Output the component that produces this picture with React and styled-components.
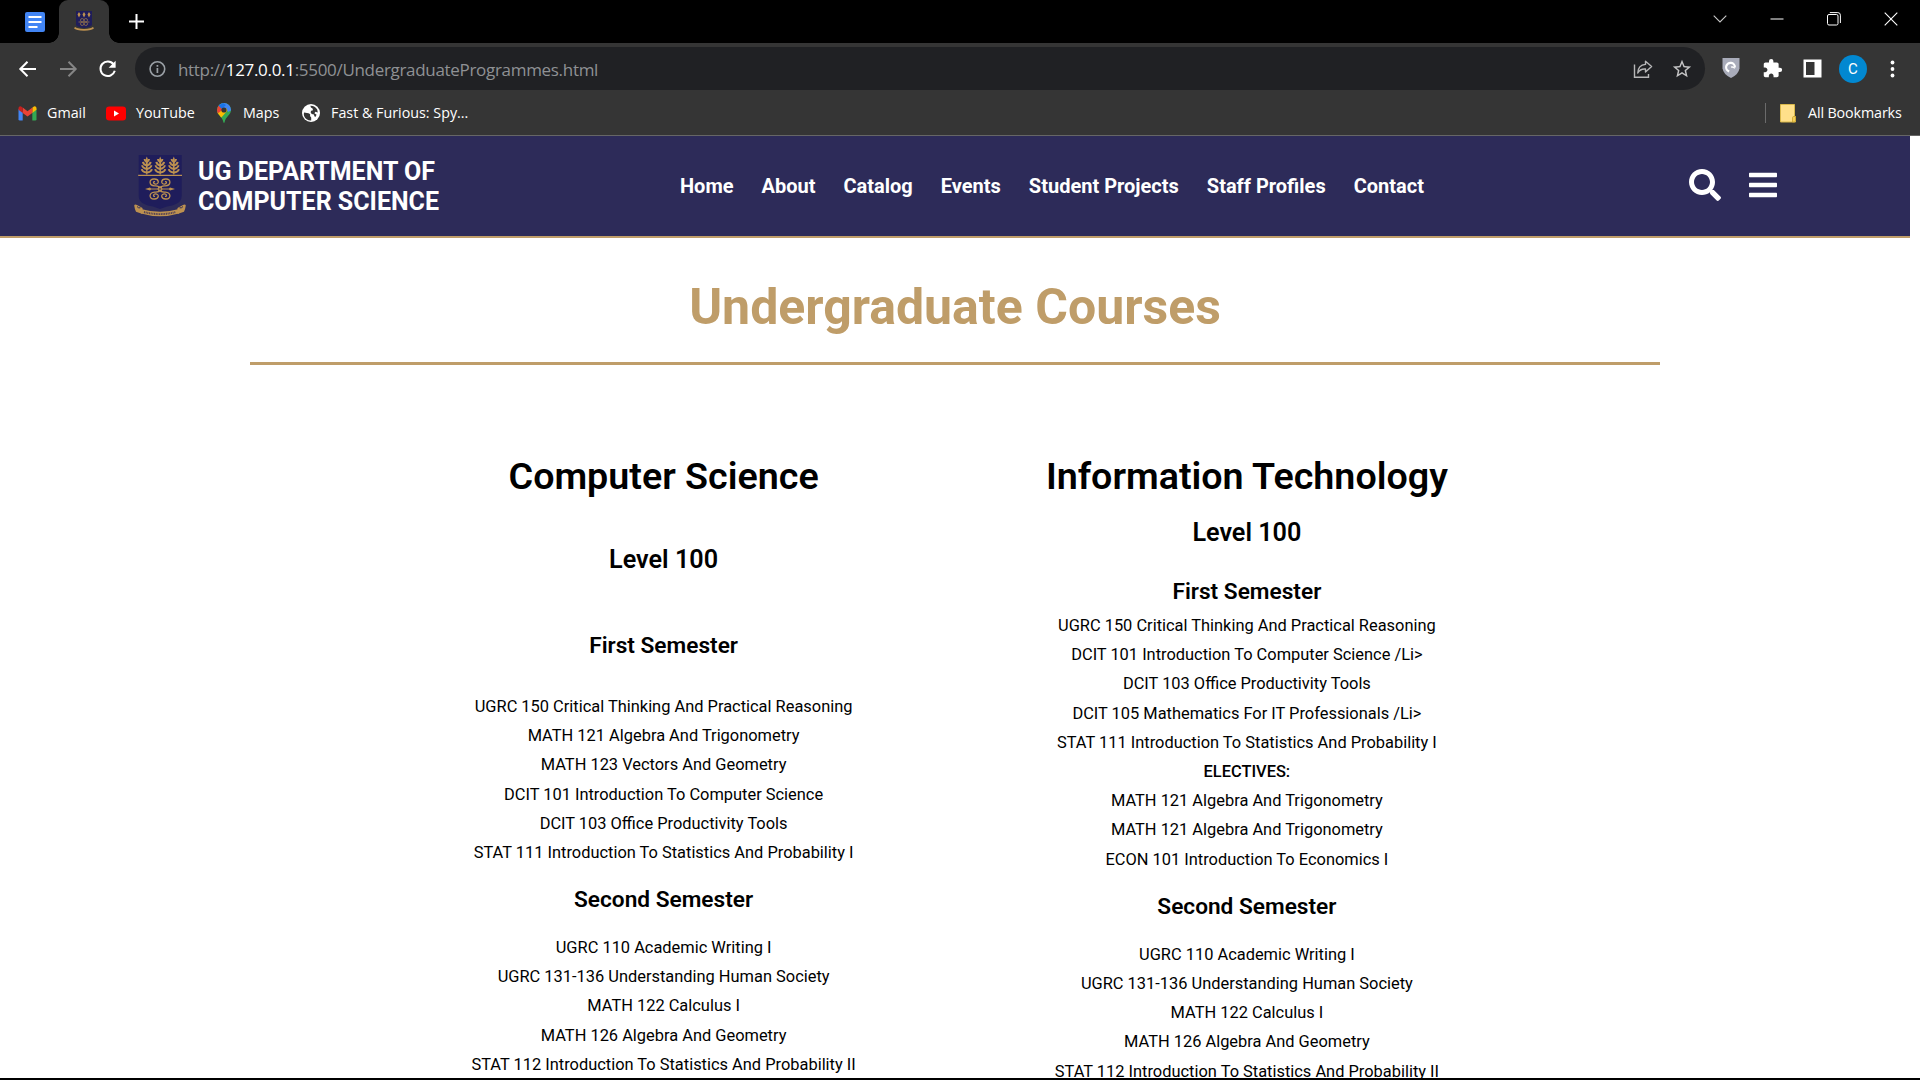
import React from 'react';
import styled, { createGlobalStyle } from 'styled-components';
import { FaSearch, FaBars } from 'react-icons/fa';
import { MdExtension, MdStarOutline } from 'react-icons/md';

const GlobalStyle = createGlobalStyle`
  * { box-sizing: border-box; }
  body {
    margin: 0;
    background: #fff;
    overflow: hidden;
    font-family: Roboto, "Liberation Sans", sans-serif;
  }
  h1, h2, h3, h4, ul { margin: 0; padding: 0; }
  ul { list-style: none; }
  svg { display: block; flex: none; }
`;

const ui = `"Open Sans", "Noto Sans", sans-serif`;

/* ---------- browser frame ---------- */

const Window = styled.div`
  width: 1920px;
  height: 1080px;
  display: flex;
  flex-direction: column;
  overflow: hidden;
`;

const TabStrip = styled.div`
  height: 43px;
  background: #000;
  display: flex;
  justify-content: space-between;
`;

const Tabs = styled.div`
  display: flex;
  align-items: center;
  padding-left: 25px;
`;

const ActiveTab = styled.div`
  position: relative;
  width: 50px;
  height: 43px;
  margin: 0 20px 0 14px;
  padding-top: 10px;
  display: flex;
  justify-content: center;
  border-radius: 9px 9px 0 0;
  background: #353535;

  &::before,
  &::after {
    content: '';
    position: absolute;
    bottom: 0;
    width: 10px;
    height: 10px;
  }
  &::before {
    left: -10px;
    background: radial-gradient(circle at 0 0, transparent 9.5px, #353535 10px);
  }
  &::after {
    right: -10px;
    background: radial-gradient(circle at 100% 0, transparent 9.5px, #353535 10px);
  }
`;

const WindowControls = styled.div`
  display: flex;
  align-items: center;
  gap: 43px;
  height: 37px;
  padding-right: 22px;
`;

const Toolbar = styled.div`
  height: 53px;
  background: #353535;
  display: flex;
  align-items: center;
  padding: 0 18px 2px 18px;
`;

const NavButtons = styled.div`
  display: flex;
  gap: 20px;
  width: 117px;
`;

const AddressBar = styled.div`
  flex: none;
  width: 1570px;
  height: 43px;
  border-radius: 22px;
  background: #202124;
  display: flex;
  align-items: center;
  padding: 1px 13px 0;
`;

const Url = styled.span`
  flex: 1;
  margin-left: 12px;
  padding-top: 1px;
  color: #8f9194;
  font: 400 17px/24px ${ui};
  letter-spacing: -0.31px;

  b {
    font-weight: 400;
    color: #fff;
  }
`;

const AddressActions = styled.div`
  display: flex;
  align-items: center;
  gap: 18px;
  margin-right: -1px;
`;

const Extensions = styled.div`
  flex: 1;
  display: flex;
  align-items: center;
  margin-left: 17px;
`;

const Slot = styled.div`
  width: ${(p) => p.$w}px;
  flex: none;
  display: flex;
`;

const Avatar = styled.div`
  width: 28px;
  height: 28px;
  border-radius: 50%;
  background: #0288d1;
  color: #fff;
  text-align: center;
  font: 400 15px/28px Roboto, sans-serif;
`;

const BookmarkBar = styled.div`
  height: 40px;
  background: #353535;
  border-bottom: 1px solid #666;
  display: flex;
  align-items: center;
  justify-content: space-between;
  padding: 0 18px 5px 18px;
`;

const BookmarkGroup = styled.div`
  display: flex;
  align-items: center;
`;

const Bookmark = styled.div`
  width: ${(p) => p.$w}px;
  display: flex;
  align-items: center;
  gap: ${(p) => p.$gap}px;
  color: #fff;
  white-space: nowrap;
  font: 400 14.3px/20px ${ui};
  letter-spacing: ${(p) => p.$track || 0}px;
`;

const Divider = styled.div`
  width: 1px;
  height: 20px;
  margin-right: 14px;
  background: #6b6b6b;
`;

/* ---------- web page ---------- */

const Page = styled.div`
  flex: 1;
  min-height: 0;
  overflow: hidden;
  padding-right: 10px;
  background: #fff;
  border-bottom: 2px solid #000;
`;

const SiteHeader = styled.header`
  height: 102px;
  background: #2d2b59;
  border-bottom: 2px solid #bf9d69;
  display: flex;
  align-items: center;
`;

const Brand = styled.div`
  width: 550px;
  display: flex;
  align-items: center;
  gap: 8px;
  margin-left: 130px;
  color: #fff;
  font-weight: 700;
  font-size: 25px;
  line-height: 30px;
`;

const BrandName = styled.div`
  padding-top: 2px;
`;

const Menu = styled.nav`
  flex: 1;
  display: flex;
  gap: 28px;
  color: #fff;
  font-weight: 700;
  font-size: 20px;
  line-height: 24px;
`;

const HeaderIcons = styled.div`
  display: flex;
  gap: 28px;
  padding: 0 133px 2px 0;
  color: #fff;
  font-size: 32px;
`;

const MenuIcon = styled(FaBars)`
  width: 28px;
`;

const Title = styled.h1`
  margin-top: 39px;
  text-align: center;
  color: #bf9d69;
  font-weight: 700;
  font-size: 50px;
  line-height: 60px;
`;

const Rule = styled.div`
  width: 1410px;
  height: 3px;
  margin: 25px auto 89px;
  background: #bf9d69;
`;

const Columns = styled.div`
  display: flex;
  gap: 143.3px;
  padding-left: 443.6px;
  color: #000;
  text-align: center;
`;

const Column = styled.section`
  width: 440px;
`;

const Programme = styled.h2`
  font-weight: 600;
  font-size: 37.65px;
  line-height: 44px;
`;

const Level = styled.h3`
  margin-top: ${(p) => p.$top}px;
  font-weight: 600;
  font-size: 25.2px;
  line-height: 30px;
`;

const Semester = styled.h4`
  margin-top: ${(p) => p.$top}px;
  font-weight: 600;
  font-size: 22.65px;
  line-height: 26px;
`;

const CourseList = styled.ul`
  margin-top: ${(p) => p.$top}px;
`;

const Course = styled.li`
  font-weight: ${(p) => (p.$strong ? 500 : 400)};
  font-size: 16.42px;
  line-height: 29.2px;
  white-space: nowrap;
`;

/* ---------- drawings ---------- */

const tree = 'M0 0 L1 2.4 L.6 18 H-.6 L-1 2.4 Z';
const Tree = ({ x }) => (
  <g transform={`translate(${x} 8.5)`}>
    <path d={tree} fill="#bd9150" />
    <path
      d="M0 5.5Q-2.2 4.6-2.2 2.6M0 5.5Q2.2 4.6 2.2 2.6M0 9Q-3.6 8-3.8 5.4M0 9Q3.6 8 3.8 5.4M0 12.5Q-4.4 11.5-4.6 8.8M0 12.5Q4.4 11.5 4.6 8.8M0 16Q-4.6 15.4-5 12.6M0 16Q4.6 15.4 5 12.6"
      fill="none"
      stroke="#bd9150"
      strokeWidth="2"
    />
  </g>
);

const Curl = ({ sx, sy }) => (
  <path
    transform={`translate(30 41) scale(${sx} ${sy})`}
    d="M0 -1.2C1-3.4 3.2-3 5.4-3.2C11-3.6 11.6-9.8 6-10C.6-10.2.4-4.7 4.8-4.9C7-5.2 7-7.8 5-7.4"
    fill="none"
    stroke="#bd9150"
    strokeWidth="1.3"
  />
);

const Crest = () => (
  <svg width="60" height="76" viewBox="0 0 60 76">
    <path d="M8.7 7H51.7V48C51.7 55 44 57.5 37 58.5L30 61L23 58.5C16 57.5 8.7 55 8.7 48Z" fill="#1f1d5b" />
    <Tree x={16.8} />
    <Tree x={30.2} />
    <Tree x={43.8} />
    <path d="M8.2 27.4H52" stroke="#bd9150" strokeWidth="1.1" />
    <Curl sx={1} sy={1} />
    <Curl sx={-1} sy={1} />
    <Curl sx={1} sy={-1} />
    <Curl sx={-1} sy={-1} />
    <path d="M15 41L20 39.6L21 40.4H39L40 39.6L45 41L40 42.4L39 41.6H21L20 42.4Z" fill="#bd9150" />
    <circle cx="30" cy="41" r="1.9" fill="none" stroke="#bd9150" strokeWidth="1.1" />
    <path d="M11 61Q30 66.5 49 61V65.5Q30 71 11 65.5Z" fill="#bd9150" />
    <path d="M4.2 57.5Q4.6 56 7 57L12.5 60V66L6 63.8Q4.8 61.5 4.2 57.5ZM55.8 57.5Q55.4 56 53 57L47.5 60V66L54 63.8Q55.2 61.5 55.8 57.5Z" fill="#bd9150" />
    <path d="M7 58.5Q8.6 60.5 10.4 59.8M53 58.5Q51.4 60.5 49.6 59.8" fill="none" stroke="#2d2b59" strokeWidth="1" />
    <path d="M14 64Q30 68.2 46 64" fill="none" stroke="#4c3c55" strokeWidth="1.9" strokeDasharray="1 .7" />
  </svg>
);

const Favicon = () => (
  <svg width="20" height="22" viewBox="0 0 20 22">
    <path d="M2 1H18V15Q17 17 10 18Q3 17 2 15Z" fill="#1f1d5b" />
    <path d="M5 2L6.5 4.5L5 7.5L3.5 4.5ZM10 2L11.5 4.5L10 7.5L8.5 4.5ZM15 2L16.5 4.5L15 7.5L13.5 4.5Z" fill="#bd9150" />
    <path d="M4.5 12H15.5" stroke="#80654f" strokeWidth="1" />
    <g fill="none" stroke="#80654f" strokeWidth="1">
      <circle cx="8.2" cy="10.2" r="1.7" />
      <circle cx="11.8" cy="10.2" r="1.7" />
      <circle cx="8.2" cy="13.8" r="1.7" />
      <circle cx="11.8" cy="13.8" r="1.7" />
    </g>
    <path d="M.6 17.5Q2 19.6 10 19.8Q18 19.6 19.4 17.5" fill="none" stroke="#bd9150" strokeWidth="1.8" />
  </svg>
);

const DocsIcon = () => (
  <svg width="20" height="20" viewBox="0 0 20 20">
    <rect width="20" height="20" rx="2" fill="#4285f4" />
    <path d="M3.5 5H16.5M3.5 10H16.5M3.5 15H12.5" stroke="#fff" strokeWidth="2.2" />
  </svg>
);

const Plus = () => (
  <svg width="15" height="15" viewBox="0 0 15 15">
    <path d="M7.5 0V15M0 7.5H15" stroke="#fff" strokeWidth="2" />
  </svg>
);

const Arrow = ({ color, flip }) => (
  <svg width="20" height="20" viewBox="0 0 20 20">
    <path
      transform={flip ? 'translate(20 0) scale(-1 1)' : undefined}
      d="M18 10H2.5M9.5 2.8L2.3 10L9.5 17.2"
      fill="none"
      stroke={color}
      strokeWidth="2"
    />
  </svg>
);

const Reload = () => (
  <svg width="20" height="20" viewBox="0 0 20 20">
    <path d="M15.6 5.3A7.3 7.3 0 1 0 16.8 11.8" fill="none" stroke="#fff" strokeWidth="2" />
    <path d="M17.6 1.8V8.8H10.6Z" fill="#fff" />
  </svg>
);

const Info = () => (
  <svg width="18" height="18" viewBox="0 0 18 18">
    <circle cx="9.4" cy="9" r="7.3" fill="none" stroke="#9aa0a6" strokeWidth="1.6" />
    <path d="M9.4 8V13M9.4 5V6.8" stroke="#9aa0a6" strokeWidth="1.7" />
  </svg>
);

const Share = () => (
  <svg width="20" height="20" viewBox="0 0 20 20">
    <g fill="none" stroke="#b7b7b8" strokeWidth="1.4">
      <path d="M1.5 5.5V18.3H15.5V15" />
      <path d="M12.5 2.2L18.6 7.6L12.5 13V10Q7 9.6 4.8 14Q5 6 12.5 5.4Z" strokeLinejoin="round" />
    </g>
  </svg>
);

const Shield = () => (
  <svg width="18" height="21" viewBox="0 0 18 21">
    <path d="M.5 0H17.5V10.5Q16.5 16.5 9 20Q1.5 16.5 .5 10.5Z" fill="#a9acba" />
    <path
      d="M7.2 13.4A4.4 4.4 0 1 1 12.9 9.4"
      fill="none"
      stroke="#fff"
      strokeWidth="2.2"
    />
    <path d="M12.8 10.4Q11.4 8.4 9 9.2" fill="none" stroke="#fff" strokeWidth="1.4" />
  </svg>
);

const SidePanel = () => (
  <svg width="19" height="19" viewBox="0 0 19 19">
    <path fillRule="evenodd" fill="#fff" d="M.5.5H18.5V18.5H.5ZM3 3V16H11.5V3Z" />
  </svg>
);

const Dots = () => (
  <svg width="5" height="18" viewBox="0 0 5 18">
    <circle cx="2.5" cy="2.5" r="1.9" fill="#fff" />
    <circle cx="2.5" cy="9" r="1.9" fill="#fff" />
    <circle cx="2.5" cy="15.5" r="1.9" fill="#fff" />
  </svg>
);

const Gmail = () => (
  <svg width="19" height="15" viewBox="0 0 19 15">
    <path d="M.5 3V13.2Q.5 14.5 1.8 14.5H4.7V6Z" fill="#4285f4" />
    <path d="M18.5 3V13.2Q18.5 14.5 17.2 14.5H14.3V6Z" fill="#34a853" />
    <path d="M14.3 1.8V7L18.5 3.8V2.4C18.5.4 16.5-.2 15.2.9Z" fill="#fbbc04" />
    <path d="M4.7 7V1.6L9.5 5.3L14.3 1.6V7L9.5 10.6Z" fill="#ea4335" />
    <path d="M.5 2.4V3.8L4.7 7V1.8L3.8.9C2.5-.2.5.4.5 2.4Z" fill="#c5221f" />
  </svg>
);

const YouTube = () => (
  <svg width="20" height="15" viewBox="0 0 20 15">
    <rect y=".5" width="20" height="14" rx="3.2" fill="#f00" />
    <path d="M8 4.5L13 7.5L8 10.5Z" fill="#fff" />
  </svg>
);

const MapsPin = () => (
  <svg width="14" height="20" viewBox="0 0 14 20">
    <defs>
      <clipPath id="pin">
        <path d="M7 0A7 7 0 0 1 14 7C14 12 8.6 13.5 7.6 19.2Q7 20.6 6.4 19.2C5.4 13.5 0 12 0 7A7 7 0 0 1 7 0Z" />
      </clipPath>
    </defs>
    <g clipPath="url(#pin)">
      <rect width="14" height="20" fill="#34a853" />
      <path d="M-2 12L7 2L11 7L3 16Z" fill="#fbbc04" />
      <path d="M7 7L14 0V-2H5L1 2Z" fill="#4285f4" />
      <path d="M9 4.5L12.5 1L15 7L11 9Z" fill="#4285f4" />
      <path d="M1.6 2.4L6 6.6L0 11L-2 6Z" fill="#ea4335" />
      <path d="M1.6 2.4L6 0L9 2L4.8 6Z" fill="#1a73e8" />
    </g>
    <circle cx="7" cy="7" r="2.6" fill="#353535" />
  </svg>
);

const Globe = () => (
  <svg width="18" height="18" viewBox="0 0 18 18">
    <circle cx="9" cy="9" r="9" fill="#fff" />
    <path d="M2 8.5L6.5 9.2Q8.8 9.8 8 12L9.2 13.4V16.4Q4 16.6 2.1 12Q1.6 10 2 8.5ZM8.4 1.8Q13 1.6 15.2 5.6L15.8 8.6L13.4 7.8L12.4 9.2L14.6 10.8L13.4 13Q12 13 12 10.6Q9 10.4 8.6 8.2Q8.6 6.4 11 6.2L10.6 4.4Q8.4 4 8.4 1.8Z" fill="#353535" />
  </svg>
);

const Folder = () => (
  <svg width="16" height="19" viewBox="0 0 16 19">
    <path d="M.5.5H14.5V12.5H15.5V18H.5Z" fill="#ffe08a" stroke="#d9b84a" />
    <path d="M12.5 18V13.5Q12.5 12.5 14 12.5H15.5V17L14.5 18Z" fill="#f7cf58" stroke="#c9a530" strokeWidth=".8" />
  </svg>
);

const Controls = () => (
  <WindowControls>
    <svg width="14" height="14" viewBox="0 0 14 14">
      <path d="M.7 3.6L7 9.9L13.3 3.6" fill="none" stroke="#c8c8c8" strokeWidth="1.1" />
    </svg>
    <svg width="14" height="14" viewBox="0 0 14 14">
      <path d="M.5 7H13.5" stroke="#fff" strokeWidth="1" />
    </svg>
    <svg width="14" height="14" viewBox="0 0 14 14">
      <g fill="none" stroke="#fff" strokeWidth="1">
        <rect x=".5" y="2.5" width="10.5" height="10.5" rx="1.5" />
        <path d="M2.8.6H10.8Q13.4.6 13.4 3.2V11" />
      </g>
    </svg>
    <svg width="14" height="14" viewBox="0 0 14 14">
      <path d="M.7.7L13.3 13.3M13.3.7L.7 13.3" stroke="#fff" strokeWidth="1.1" />
    </svg>
  </WindowControls>
);

/* ---------- content ---------- */

const menu = ['Home', 'About', 'Catalog', 'Events', 'Student Projects', 'Staff Profiles', 'Contact'];

const secondSemester = [
  'UGRC 110 Academic Writing I',
  'UGRC 131-136 Understanding Human Society',
  'MATH 122 Calculus I',
  'MATH 126 Algebra And Geometry',
  'STAT 112 Introduction To Statistics And Probability II',
];

const programmes = [
  {
    name: 'Computer Science',
    levelTop: 46.6,
    semesters: [
      {
        name: 'First Semester',
        top: 58.4,
        listTop: 33,
        courses: [
          'UGRC 150 Critical Thinking And Practical Reasoning',
          'MATH 121 Algebra And Trigonometry',
          'MATH 123 Vectors And Geometry',
          'DCIT 101 Introduction To Computer Science',
          'DCIT 103 Office Productivity Tools',
          'STAT 111 Introduction To Statistics And Probability I',
        ],
      },
      { name: 'Second Semester', top: 20, listTop: 19.7, courses: secondSemester },
    ],
  },
  {
    name: 'Information Technology',
    levelTop: 19.6,
    semesters: [
      {
        name: 'First Semester',
        top: 31.4,
        listTop: 6.07,
        courses: [
          'UGRC 150 Critical Thinking And Practical Reasoning',
          'DCIT 101 Introduction To Computer Science /Li>',
          'DCIT 103 Office Productivity Tools',
          'DCIT 105 Mathematics For IT Professionals /Li>',
          'STAT 111 Introduction To Statistics And Probability I',
          'ELECTIVES:',
          'MATH 121 Algebra And Trigonometry',
          'MATH 121 Algebra And Trigonometry',
          'ECON 101 Introduction To Economics I',
        ],
      },
      { name: 'Second Semester', top: 19.93, listTop: 20, courses: secondSemester },
    ],
  },
];

export default function App() {
  return (
    <Window>
      <GlobalStyle />
      <TabStrip>
        <Tabs>
          <DocsIcon />
          <ActiveTab>
            <Favicon />
          </ActiveTab>
          <Plus />
        </Tabs>
        <Controls />
      </TabStrip>

      <Toolbar>
        <NavButtons>
          <Arrow color="#fff" />
          <Arrow color="#868686" flip />
          <Reload />
        </NavButtons>
        <AddressBar>
          <Info />
          <Url>
            http://<b>127.0.0.1</b>:5500/UndergraduateProgrammes.html
          </Url>
          <AddressActions>
            <Share />
            <MdStarOutline size={22} color="#c4c4c5" />
          </AddressActions>
        </AddressBar>
        <Extensions>
          <Slot $w={40}>
            <Shield />
          </Slot>
          <Slot $w={41}>
            <MdExtension size={21} color="#fff" />
          </Slot>
          <Slot $w={36}>
            <SidePanel />
          </Slot>
          <Slot $w={51}>
            <Avatar>C</Avatar>
          </Slot>
          <Dots />
        </Extensions>
      </Toolbar>

      <BookmarkBar>
        <BookmarkGroup>
          <Bookmark $w={88} $gap={10}>
            <Gmail />
            Gmail
          </Bookmark>
          <Bookmark $w={111} $gap={10}>
            <YouTube />
            YouTube
          </Bookmark>
          <Bookmark $w={85} $gap={12}>
            <MapsPin />
            Maps
          </Bookmark>
          <Bookmark $w={180} $gap={11}>
            <Globe />
            Fast &amp; Furious: Spy...
          </Bookmark>
        </BookmarkGroup>
        <BookmarkGroup>
          <Divider />
          <Bookmark $w={122} $gap={12} $track={-0.12}>
            <Folder />
            All Bookmarks
          </Bookmark>
        </BookmarkGroup>
      </BookmarkBar>

      <Page>
        <SiteHeader>
          <Brand>
            <Crest />
            <BrandName>
              UG DEPARTMENT OF
              <br />
              COMPUTER SCIENCE
            </BrandName>
          </Brand>
          <Menu>
            {menu.map((item) => (
              <span key={item}>{item}</span>
            ))}
          </Menu>
          <HeaderIcons>
            <FaSearch />
            <MenuIcon />
          </HeaderIcons>
        </SiteHeader>

        <Title>Undergraduate Courses</Title>
        <Rule />

        <Columns>
          {programmes.map((programme) => (
            <Column key={programme.name}>
              <Programme>{programme.name}</Programme>
              <Level $top={programme.levelTop}>Level 100</Level>
              {programme.semesters.map((semester) => (
                <React.Fragment key={semester.name}>
                  <Semester $top={semester.top}>{semester.name}</Semester>
                  <CourseList $top={semester.listTop}>
                    {semester.courses.map((course, i) => (
                      <Course key={i} $strong={course === 'ELECTIVES:'}>
                        {course}
                      </Course>
                    ))}
                  </CourseList>
                </React.Fragment>
              ))}
            </Column>
          ))}
        </Columns>
      </Page>
    </Window>
  );
}
